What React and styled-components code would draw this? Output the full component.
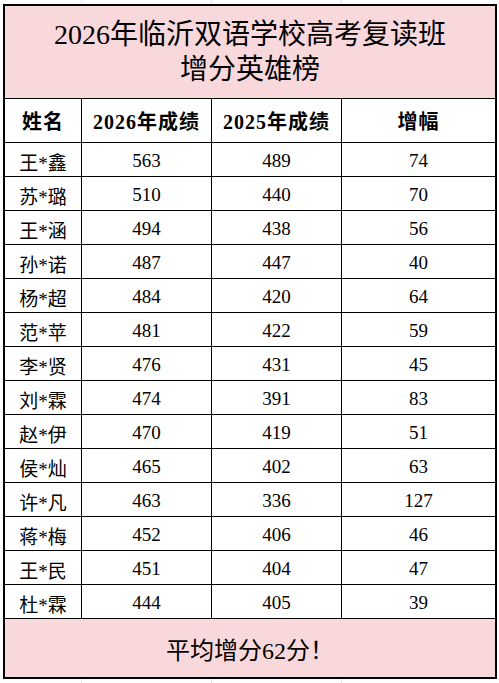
import React from "react";
import styled, { createGlobalStyle } from "styled-components";

const GlobalStyle = createGlobalStyle`
  html, body {
    margin: 0;
    padding: 0;
    background: #ffffff;
  }
  body {
    font-family: "Liberation Serif", "Noto Sans CJK SC", serif;
    color: #000;
  }
`;

const Page = styled.div`
  width: 499px;
  height: 683px;
  box-sizing: border-box;
  padding: 4px 2px 0 3px;
  background-color: #fff;
  background-image:
    linear-gradient(#e3e3e3, #e3e3e3),
    linear-gradient(#e3e3e3, #e3e3e3),
    linear-gradient(#e3e3e3, #e3e3e3);
  background-size: 1px 100%, 1px 100%, 1px 100%;
  background-position: 81px 0, 211px 0, 341px 0;
  background-repeat: no-repeat;
`;

const Table = styled.div`
  width: 494px;
  box-sizing: border-box;
  border: 2px solid #000;
  display: grid;
  grid-template-columns: 77px 130px 130px 153px;
  background: #fff;
`;

const Banner = styled.div`
  grid-column: 1 / -1;
  background: #f9d8dc;
  border-bottom: ${(p) => (p.$last ? "none" : "1px solid #000")};
  height: ${(p) => p.$h}px;
  box-sizing: border-box;
  display: flex;
  flex-direction: column;
  align-items: center;
  justify-content: center;
  padding-top: ${(p) => p.$pt || 0}px;
`;

const TitleLine = styled.div`
  font-size: ${(p) => p.$size}px;
  line-height: 35px;
  white-space: nowrap;
`;

const FooterText = styled.div`
  font-size: 24px;
  line-height: 30px;
  white-space: nowrap;
`;

const Cell = styled.div`
  box-sizing: border-box;
  height: ${(p) => (p.$head ? 44 : 34)}px;
  border-bottom: 1px solid #000;
  border-right: ${(p) => (p.$end ? "none" : "1px solid #000")};
  display: flex;
  align-items: center;
  justify-content: center;
  padding-top: ${(p) => (p.$head ? 0 : 3)}px;
  font-size: ${(p) => (p.$head ? 20 : 19)}px;
  font-weight: ${(p) => (p.$head ? 700 : 400)};
  letter-spacing: ${(p) => (p.$head ? "1px" : "0")};
  white-space: nowrap;
`;

const rows = [
  ["王*鑫", 563, 489, 74],
  ["苏*璐", 510, 440, 70],
  ["王*涵", 494, 438, 56],
  ["孙*诺", 487, 447, 40],
  ["杨*超", 484, 420, 64],
  ["范*苹", 481, 422, 59],
  ["李*贤", 476, 431, 45],
  ["刘*霖", 474, 391, 83],
  ["赵*伊", 470, 419, 51],
  ["侯*灿", 465, 402, 63],
  ["许*凡", 463, 336, 127],
  ["蒋*梅", 452, 406, 46],
  ["王*民", 451, 404, 47],
  ["杜*霖", 444, 405, 39],
];

const headers = ["姓名", "2026年成绩", "2025年成绩", "增幅"];

export default function App() {
  return (
    <>
      <GlobalStyle />
      <Page>
        <Table>
          <Banner $h={93}>
            <TitleLine $size={28}>2026年临沂双语学校高考复读班</TitleLine>
            <TitleLine $size={28}>增分英雄榜</TitleLine>
          </Banner>
          {headers.map((h, i) => (
            <Cell key={h} $head $end={i === 3}>
              {h}
            </Cell>
          ))}
          {rows.map((r) =>
            r.map((v, i) => (
              <Cell key={r[0] + i} $end={i === 3}>
                {v}
              </Cell>
            ))
          )}
          <Banner $h={58} $pt={5} $last>
            <FooterText>平均增分62分！</FooterText>
          </Banner>
        </Table>
      </Page>
    </>
  );
}
